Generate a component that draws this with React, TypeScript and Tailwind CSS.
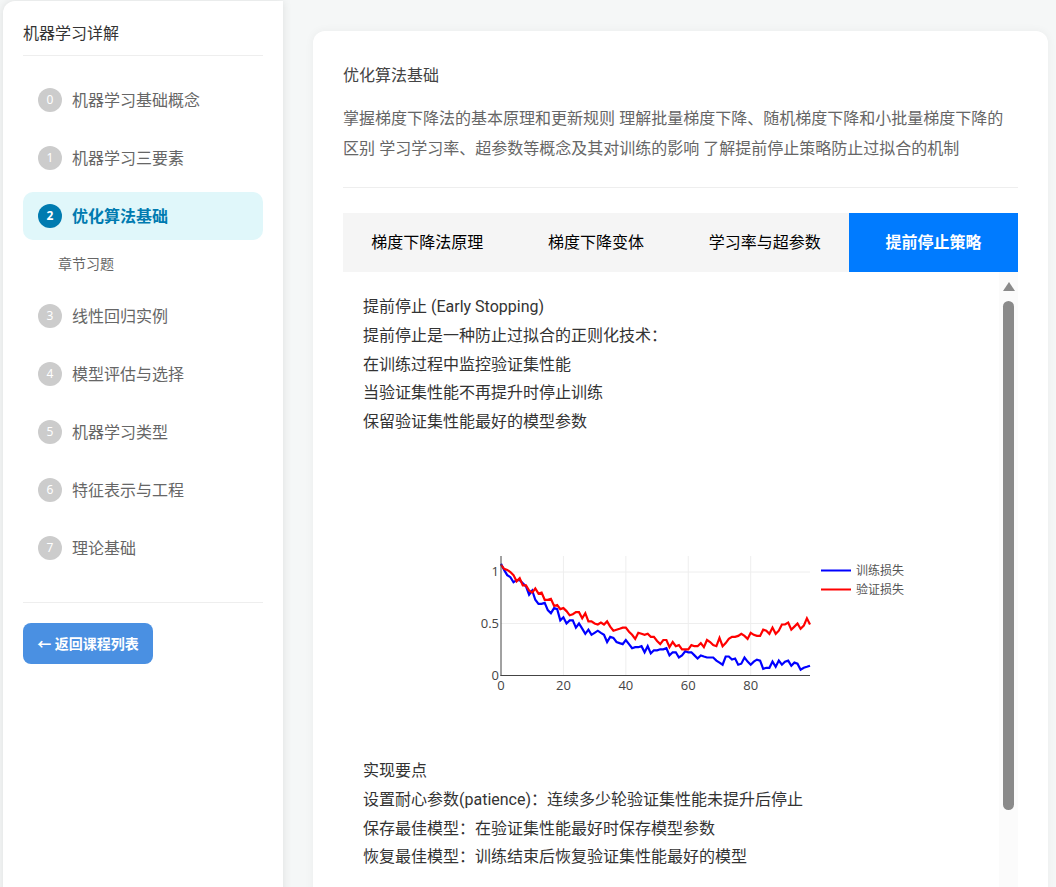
const chapters = [
  { n: 0, title: "机器学习基础概念" },
  { n: 1, title: "机器学习三要素" },
  { n: 2, title: "优化算法基础", active: true, sub: "章节习题" },
  { n: 3, title: "线性回归实例" },
  { n: 4, title: "模型评估与选择" },
  { n: 5, title: "机器学习类型" },
  { n: 6, title: "特征表示与工程" },
  { n: 7, title: "理论基础" },
];

const tabs = ["梯度下降法原理", "梯度下降变体", "学习率与超参数", "提前停止策略"];

const train = [
  1.08, 1.02, 0.97, 0.95, 0.9, 0.92, 0.92, 0.89, 0.86, 0.78,
  0.82, 0.73, 0.69, 0.69, 0.7, 0.63, 0.6, 0.65, 0.64, 0.53,
  0.56, 0.5, 0.53, 0.53, 0.46, 0.5, 0.45, 0.4, 0.44, 0.39,
  0.41, 0.43, 0.41, 0.39, 0.32, 0.37, 0.36, 0.32, 0.31, 0.3,
  0.34, 0.3, 0.26, 0.27, 0.27, 0.28, 0.22, 0.28, 0.21, 0.24,
  0.24, 0.25, 0.25, 0.26, 0.19, 0.22, 0.22, 0.17, 0.19, 0.23,
  0.22, 0.22, 0.19, 0.16, 0.19, 0.18, 0.17, 0.17, 0.17, 0.14,
  0.12, 0.1, 0.18, 0.18, 0.15, 0.16, 0.1, 0.11, 0.17, 0.13,
  0.1, 0.13, 0.15, 0.14, 0.06, 0.07, 0.07, 0.13, 0.08, 0.14,
  0.1, 0.13, 0.14, 0.09, 0.12, 0.11, 0.05, 0.07, 0.08, 0.09,
];

const valid = [
  1.07, 1.03, 1.02, 1.0, 0.97, 0.91, 0.94, 0.87, 0.87, 0.82,
  0.8, 0.84, 0.79, 0.8, 0.73, 0.73, 0.74, 0.67, 0.68, 0.64,
  0.65, 0.62, 0.58, 0.59, 0.61, 0.61, 0.55, 0.6, 0.52, 0.52,
  0.5, 0.49, 0.51, 0.49, 0.52, 0.47, 0.43, 0.44, 0.45, 0.46,
  0.46, 0.42, 0.39, 0.35, 0.41, 0.4, 0.39, 0.4, 0.37, 0.37,
  0.33, 0.3, 0.34, 0.34, 0.27, 0.32, 0.28, 0.29, 0.25, 0.25,
  0.25, 0.29, 0.28, 0.28, 0.31, 0.27, 0.34, 0.32, 0.29, 0.28,
  0.36, 0.28, 0.31, 0.35, 0.37, 0.37, 0.38, 0.4, 0.38, 0.35,
  0.41, 0.39, 0.38, 0.38, 0.44, 0.43, 0.4, 0.46, 0.4, 0.43,
  0.49, 0.49, 0.51, 0.44, 0.47, 0.5, 0.45, 0.48, 0.55, 0.49,
];

const px = (i: number) => 80 + i * (309 / 99);
const py = (v: number) => 219 - v * 103;
const line = (d: number[]) => d.map((v, i) => `${px(i).toFixed(1)},${py(v).toFixed(1)}`).join(" ");

function LossChart() {
  return (
    <svg width="500" height="300" className="block mx-auto" style={{ fontFamily: '"Open Sans", "Noto Sans CJK SC", sans-serif' }}>
      {[20, 40, 60, 80].map((x) => (
        <line key={x} x1={px(x)} x2={px(x)} y1="100" y2="219" stroke="#eeeeee" />
      ))}
      {[0.5, 1].map((v) => (
        <line key={v} x1="80" x2="389" y1={py(v)} y2={py(v)} stroke="#eeeeee" />
      ))}
      <polyline points={line(train)} fill="none" stroke="#0000ff" strokeWidth="2.2" />
      <polyline points={line(valid)} fill="none" stroke="#ff0000" strokeWidth="2.2" />
      <line x1="80" x2="80" y1="100" y2="220" stroke="#444444" />
      <line x1="79.5" x2="389" y1="219.5" y2="219.5" stroke="#444444" />
      {[0, 20, 40, 60, 80].map((x) => (
        <text key={x} x={px(x)} y="234" textAnchor="middle" fontSize="13" fill="#444444">{x}</text>
      ))}
      <text x="78" y="120" textAnchor="end" fontSize="13" fill="#444444">1</text>
      <text x="78" y="172" textAnchor="end" fontSize="13" fill="#444444">0.5</text>
      <text x="78" y="224" textAnchor="end" fontSize="13" fill="#444444">0</text>
      <line x1="400" x2="430" y1="114.5" y2="114.5" stroke="#0000ff" strokeWidth="2" />
      <line x1="400" x2="430" y1="133.5" y2="133.5" stroke="#ff0000" strokeWidth="2" />
      <text x="435" y="119" fontSize="12" fill="#555555">训练损失</text>
      <text x="435" y="138" fontSize="12" fill="#555555">验证损失</text>
    </svg>
  );
}

function Sidebar() {
  return (
    <aside className="w-[280px] shrink-0 bg-white rounded-tl-xl px-5 pt-5 shadow-[0_0_10px_rgba(0,0,0,0.1)] min-h-[900px]">
      <h2 className="text-[16px] leading-6 pb-2.5 mb-5 text-[#333] border-b border-[#eeeeee] font-normal">机器学习详解</h2>
      <nav className="flex flex-col">
        {chapters.map((c) => (
          <div key={c.n} className="mb-2.5">
            <div className={`h-12 flex items-center px-[15px] rounded-[10px] ${c.active ? "bg-[#e0f7fa] text-[#007bb0] font-bold" : "text-[#666666]"}`}>
              <span className={`w-6 h-6 rounded-full mr-2.5 flex items-center justify-center text-[12px] text-white ${c.active ? "bg-[#007bb0]" : "bg-[#cccccc]"}`}>{c.n}</span>
              <span className="text-[16px]">{c.title}</span>
            </div>
            {c.sub && <div className="h-[42px] pl-[35px] pt-[4px] flex items-center text-[14px] text-[#666666]">{c.sub}</div>}
          </div>
        ))}
      </nav>
      <div className="mt-5 pt-5 border-t border-[#eeeeee]">
        <button className="w-[130px] h-[41px] rounded-lg bg-[#4a90e2] text-white text-[14px] font-bold whitespace-nowrap">← 返回课程列表</button>
      </div>
    </aside>
  );
}

export default function App() {
  return (
    <div className="h-[887px] overflow-hidden bg-[#f5f7f7] pl-[3px] pt-[1px] flex" style={{ fontFamily: '"Noto Sans", "Noto Sans CJK SC", sans-serif' }}>
      <Sidebar />
      <main className="flex-1 pl-[30px] pr-2 pt-[30px]">
        <div className="bg-white rounded-xl px-[30px] pt-[29px] shadow-[0_0_10px_rgba(0,0,0,0.05)] min-h-[900px]">
          <h1 className="text-[16px] leading-[30px] text-[#444] font-normal">优化算法基础</h1>
          <p className="text-[16px] leading-[30px] text-[#666666] pb-[24px] border-b border-[#eeeeee] mt-[13px] mb-[25px]">
            掌握梯度下降法的基本原理和更新规则 理解批量梯度下降、随机梯度下降和小批量梯度下降的区别 学习学习率、超参数等概念及其对训练的影响 了解提前停止策略防止过拟合的机制
          </p>
          <div className="grid grid-cols-4 bg-[#f5f5f5]">
            {tabs.map((t, i) => (
              <div key={t} className={`h-[59px] pb-[2px] flex items-center justify-center text-[16px] ${i === 3 ? "bg-[#007bff] text-white font-bold" : "text-black"}`}>{t}</div>
            ))}
          </div>
          <div className="flex">
            <div className="flex-1 px-5 pt-[21px] text-[16px] leading-[28.8px] text-[#333]" style={{ fontFamily: 'Roboto, "Noto Sans CJK SC", sans-serif' }}>
              <p>提前停止 (Early Stopping)</p>
              <p>提前停止是一种防止过拟合的正则化技术：</p>
              <p>在训练过程中监控验证集性能</p>
              <p>当验证集性能不再提升时停止训练</p>
              <p>保留验证集性能最好的模型参数</p>
              <div className="mt-[19px] mb-px">
                <LossChart />
              </div>
              <p>实现要点</p>
              <p>设置耐心参数(patience)：连续多少轮验证集性能未提升后停止</p>
              <p>保存最佳模型：在验证集性能最好时保存模型参数</p>
              <p>恢复最佳模型：训练结束后恢复验证集性能最好的模型</p>
            </div>
            <div className="w-[19px] shrink-0 bg-[#fbfbfb] flex flex-col items-center pt-[10px] h-[620px]">
              <svg width="12" height="9" viewBox="0 0 12 9" className="mb-[10px]">
                <path d="M6 0 L12 9 L0 9 Z" fill="#8a8a8a" />
              </svg>
              <div className="w-[11px] h-[509px] rounded-full bg-[#8a8a8a]" />
            </div>
          </div>
        </div>
      </main>
    </div>
  );
}
